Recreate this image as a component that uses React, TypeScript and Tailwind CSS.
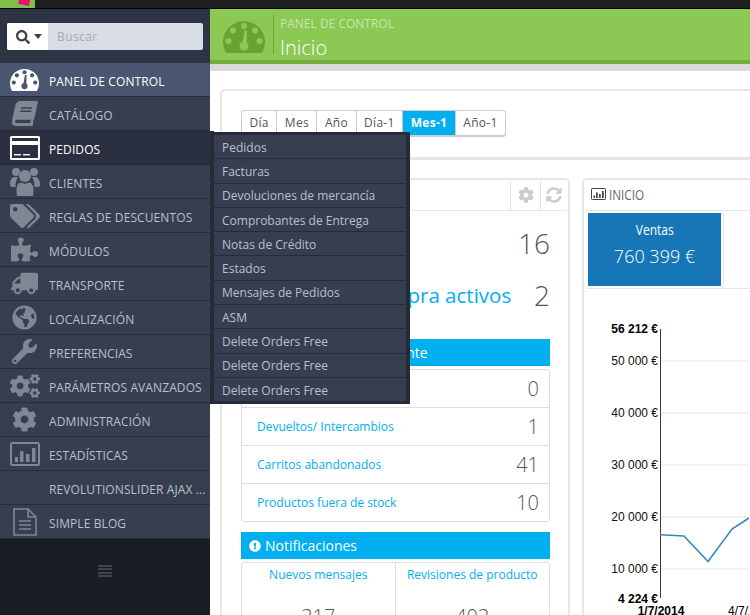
import {
  FaBook,
  FaClock,
  FaCog,
  FaCogs,
  FaExclamationCircle,
  FaGlobeAmericas,
  FaPuzzlePiece,
  FaSearch,
  FaSyncAlt,
  FaTags,
  FaTruck,
  FaWrench,
} from "react-icons/fa";
import type { ReactNode } from "react";

const Gauge = ({ className, hole }: { className: string; hole: string }) => (
  <svg viewBox="0 0 42 33" className={className}>
    <path d="M3 33 A21 21 0 1 1 39 33 Z" fill="currentColor" />
    <g fill={hole}>
      <circle cx="21" cy="6" r="3" />
      <circle cx="10" cy="10.5" r="3" />
      <circle cx="32" cy="10.5" r="3" />
      <circle cx="5.5" cy="21" r="3" />
      <circle cx="36.5" cy="21" r="3" />
      <circle cx="21" cy="26" r="4.5" />
      <path d="M19 26 L21.5 10 L24 10.5 L23.5 26 Z" />
    </g>
  </svg>
);

const CardIcon = () => (
  <svg viewBox="0 0 30 24" className="h-6 w-[30px] text-white">
    <rect x="0" y="0" width="30" height="24" rx="1.5" fill="currentColor" />
    <rect x="2" y="2" width="26" height="3" fill="#2b3040" />
    <rect x="2" y="9" width="26" height="13" fill="#2b3040" />
    <rect x="4" y="18" width="7" height="1.4" fill="currentColor" />
    <rect x="13" y="18" width="7" height="1.4" fill="currentColor" />
  </svg>
);

const UsersIcon = () => (
  <svg viewBox="0 0 30 29" className="h-[29px] w-[30px] text-[#7f8694]" fill="currentColor">
    <circle cx="6" cy="5" r="4" />
    <circle cx="24" cy="5" r="4" />
    <path d="M0 19 C0 12 2 10 5 10 L8 10 C6 13 5.5 16 5.5 20 L2 20 Z" />
    <path d="M30 19 C30 12 28 10 25 10 L22 10 C24 13 24.5 16 24.5 20 L28 20 Z" />
    <circle cx="15" cy="9" r="6" />
    <path d="M7 29 C5.5 20 7.5 16 11 15.5 C13 17 17 17 19 15.5 C22.5 16 24.5 20 23 29 Z" />
  </svg>
);

const StatsIcon = ({ className }: { className: string }) => (
  <svg viewBox="0 0 30 24" className={className}>
    <rect x="1" y="1" width="28" height="22" rx="1.5" fill="none" stroke="currentColor" strokeWidth="2" />
    <rect x="5" y="15" width="3" height="5" fill="currentColor" />
    <rect x="10" y="9" width="3.5" height="11" fill="currentColor" />
    <rect x="16" y="12" width="3.5" height="8" fill="currentColor" />
    <rect x="22" y="6" width="3.5" height="14" fill="currentColor" />
  </svg>
);

const DocIcon = () => (
  <svg viewBox="0 0 24 28" className="h-7 w-6 text-[#7f8694]">
    <path d="M1 1 H15 L23 9 V27 H1 Z" fill="none" stroke="currentColor" strokeWidth="1.6" />
    <path d="M15 1 V9 H23" fill="none" stroke="currentColor" strokeWidth="1.6" />
    <path d="M6 13 H18 M6 17 H18 M6 21 H18" stroke="currentColor" strokeWidth="1.6" />
  </svg>
);

const iconCls = "text-[#7f8694]";

const MENU: { label: string; icon: ReactNode; state?: "home" | "open" }[] = [
  { label: "PANEL DE CONTROL", icon: <Gauge className="h-[23px] w-[29px] text-white" hole="#4a5570" />, state: "home" },
  { label: "CATÁLOGO", icon: <FaBook size={25} className={`${iconCls} -skew-x-12`} /> },
  { label: "PEDIDOS", icon: <CardIcon />, state: "open" },
  { label: "CLIENTES", icon: <UsersIcon /> },
  { label: "REGLAS DE DESCUENTOS", icon: <FaTags size={30} className={iconCls} /> },
  { label: "MÓDULOS", icon: <FaPuzzlePiece size={27} className={iconCls} /> },
  { label: "TRANSPORTE", icon: <FaTruck size={27} className={`${iconCls} -scale-x-100`} /> },
  { label: "LOCALIZACIÓN", icon: <FaGlobeAmericas size={25} className={iconCls} /> },
  { label: "PREFERENCIAS", icon: <FaWrench size={25} className={iconCls} /> },
  { label: "PARÁMETROS AVANZADOS", icon: <FaCogs size={30} className={iconCls} /> },
  { label: "ADMINISTRACIÓN", icon: <FaCog size={25} className={iconCls} /> },
  { label: "ESTADÍSTICAS", icon: <StatsIcon className="h-6 w-[30px] text-[#7f8694]" /> },
  { label: "REVOLUTIONSLIDER AJAX ...", icon: null },
  { label: "SIMPLE BLOG", icon: <DocIcon /> },
];

const SUBMENU = [
  "Pedidos",
  "Facturas",
  "Devoluciones de mercancía",
  "Comprobantes de Entrega",
  "Notas de Crédito",
  "Estados",
  "Mensajes de Pedidos",
  "ASM",
  "Delete Orders Free",
  "Delete Orders Free",
  "Delete Orders Free",
];

const TABS = ["Día", "Mes", "Año", "Día-1", "Mes-1", "Año-1"];

const PENDING = [
  { label: "Pedidos", value: "0" },
  { label: "Devueltos/ Intercambios", value: "1" },
  { label: "Carritos abandonados", value: "41" },
  { label: "Productos fuera de stock", value: "10" },
];

function Sidebar() {
  return (
    <aside className="relative z-10 flex h-[606px] w-[210px] shrink-0 flex-col bg-[#1a1d24]">
      <div className="h-[54px] bg-[#2d3443] px-[7px] pt-[14px]">
        <div className="flex h-[27px] overflow-hidden rounded-[2px] bg-[#d8dce5]">
          <div className="flex w-[41px] items-center gap-[4px] bg-white pl-[9px] text-[#3a3f4a]">
            <FaSearch size={14} />
            <span className="h-0 w-0 border-x-[4px] border-t-[5px] border-x-transparent border-t-[#3a3f4a]" />
          </div>
          <div className="flex items-center pl-[9px] text-[12px] tracking-[0.4px] text-[#a9a9a9]">Buscar</div>
        </div>
      </div>
      {MENU.map((item) => (
        <div
          key={item.label}
          className={`flex h-[34px] items-center border-b border-[#272c38] text-[12px] ${
            item.state === "home"
              ? "bg-[#4a5570] text-white"
              : item.state === "open"
                ? "-mr-1 bg-[#2b3040] text-white"
                : "bg-[#373e50] text-[#b9c0cc]"
          }`}
        >
          <div className="flex w-[49px] shrink-0 items-center justify-center overflow-hidden">{item.icon}</div>
          <span className="whitespace-nowrap pt-[5px] tracking-[0.1px]">{item.label}</span>
        </div>
      ))}
      <div className="flex flex-1 justify-center pt-[26px]">
        <div className="flex h-3 w-[14px] flex-col justify-between">
          <span className="h-[2px] bg-[#3d4453]" />
          <span className="h-[2px] bg-[#3d4453]" />
          <span className="h-[2px] bg-[#3d4453]" />
          <span className="h-[2px] bg-[#3d4453]" />
        </div>
      </div>
      <div className="absolute left-[210px] top-[123px] w-[200px] bg-[#262b38] pb-[2px] pl-1 pr-1 pt-[3px]">
        {SUBMENU.map((label, i) => (
          <div
            key={i}
            className="flex h-[24.3px] items-center border-b border-[#262b38] bg-[#373e50] pl-2 pt-[2px] text-[12px] text-[#b9c0cc]"
          >
            {label}
          </div>
        ))}
      </div>
    </aside>
  );
}

function Chart() {
  const ticks = [
    { y: 361, label: "50 000 €" },
    { y: 413, label: "40 000 €" },
    { y: 465, label: "30 000 €" },
    { y: 517, label: "20 000 €" },
    { y: 569, label: "10 000 €" },
  ];
  return (
    <svg
      viewBox="582 290 168 325"
      className="-ml-[5px] mt-px h-[325px] w-[168px]"
      fontFamily="Liberation Sans, Arial, sans-serif"
      fontSize="12"
    >
      {ticks.map((t) => (
        <g key={t.y}>
          <line x1="661" x2="750" y1={t.y} y2={t.y} stroke="#e5e5e5" strokeWidth="1" />
          <text x="659" y={t.y + 4} textAnchor="end" fill="#111">
            {t.label}
          </text>
        </g>
      ))}
      <text x="659" y="333" textAnchor="end" fontWeight="bold" fill="#000">
        56 212 €
      </text>
      <text x="659" y="603" textAnchor="end" fontWeight="bold" fill="#000">
        4 224 €
      </text>
      <line x1="661.5" x2="661.5" y1="329" y2="598" stroke="#3a3a3a" strokeWidth="1" />
      <polyline points="661,534.7 685,536 709,561.5 733,529 750,518" fill="none" stroke="#2f86c0" strokeWidth="1.5" />
      <text x="662" y="615" textAnchor="middle" fontWeight="bold" fill="#000">
        1/7/2014
      </text>
      <text x="729" y="615" fill="#000">
        4/7/2014
      </text>
    </svg>
  );
}

function BlueBar({ children }: { children: ReactNode }) {
  return (
    <div className="flex h-[27px] items-center gap-1 bg-[#00aff0] pl-2 text-[14px] text-white">{children}</div>
  );
}

function LeftCard() {
  return (
    <section className="-ml-[2px] h-[500px] w-[350px] shrink-0 rounded-t-[5px] border-x-2 border-t-2 border-[#e6e6e6]">
      <div className="mr-[2px] flex h-[31px] justify-end border-b border-[#e6e6e6]">
        <div className="flex w-[30px] items-center justify-center border-l border-[#e6e6e6] text-[#cccccc]">
          <FaCog size={16} />
        </div>
        <div className="flex w-[26px] items-center justify-center border-l border-[#e6e6e6] text-[#cccccc]">
          <FaSyncAlt size={16} />
        </div>
      </div>
      <div className="pl-[19px] pr-[18px]">
        <div className="flex h-[52px] items-center justify-between pt-[12px] text-[#00aff0]">
          <span className="text-[20px]">Visitantes en línea</span>
          <span className="text-[28px] font-light text-[#555555]">16</span>
        </div>
        <div className="flex h-[52px] items-center justify-between pt-[12px] text-[#00aff0]">
          <span className="pl-[15px] text-[20.5px]">Carritos de compra activos</span>
          <span className="text-[28px] font-light text-[#555555]">2</span>
        </div>
        <div className="mt-[24px]">
          <BlueBar>
            <FaClock size={12} className="mr-[10px]" />
            Actualmente Pendiente
          </BlueBar>
        </div>
        <div className="mt-[3px] rounded-[3px] border border-[#dddddd]">
          {PENDING.map((row) => (
            <div
              key={row.label}
              className="flex h-[38px] items-center justify-between border-b border-[#dddddd] pl-[15px] pr-[10px] last:h-[37px] last:border-b-0"
            >
              <span className="text-[12px] text-[#00aff0]">{row.label}</span>
              <span className="text-[20px] font-light text-[#555555]">{row.value}</span>
            </div>
          ))}
        </div>
        <div className="mt-[10px]">
          <BlueBar>
            <FaExclamationCircle size={12} />
            Notificaciones
          </BlueBar>
        </div>
        <div className="mt-[3px] grid grid-cols-2 rounded-[3px] border border-[#dddddd] text-center">
          <div className="h-[80px] border-r border-[#dddddd]">
            <div className="pt-[3px] text-[12px] text-[#00aff0]">Nuevos mensajes</div>
            <div className="pt-[18px] text-[20px] font-light text-[#555555]">317</div>
          </div>
          <div className="h-[80px]">
            <div className="pt-[3px] text-[12px] text-[#00aff0]">Revisiones de producto</div>
            <div className="pt-[18px] text-[20px] font-light text-[#555555]">403</div>
          </div>
        </div>
      </div>
    </section>
  );
}

function RightCard() {
  return (
    <section className="h-[500px] w-[300px] shrink-0 rounded-t-[5px] border-l-2 border-t-2 border-[#e6e6e6] pl-[2px]">
      <div className="flex h-[31px] items-center gap-[3px] border-b border-[#e6e6e6] pb-[2px] pl-[5px] text-[#666666]">
        <StatsIcon className="h-3 w-[15px] shrink-0 text-[#444444]" />
        <span className="origin-left scale-x-[0.78] text-[15px]">INICIO</span>
      </div>
      <div className="flex h-[78px] items-start border-b border-[#e6e6e6] pl-[2px] pt-[2px]">
        <div className="flex h-[73px] w-[133px] flex-col items-center gap-[5px] bg-[#1777b6] pt-[6px] text-white">
          <span className="scale-x-[0.8] text-[15px] leading-5">Ventas</span>
          <span className="text-[18px] font-light leading-6">760 399 €</span>
        </div>
        <div className="ml-[2px] h-[75px] w-[1px] bg-[#e6e6e6]" />
      </div>
      <Chart />
    </section>
  );
}

export default function App() {
  return (
    <div className="h-[615px] w-[750px] overflow-hidden bg-white font-['Open_Sans',sans-serif]">
      <header className="h-[9px] border-b border-black bg-[#202020]">
        <div className="relative h-[8px] w-[35px] overflow-hidden bg-[#7fc04a]">
          <div className="absolute left-[19px] top-[-5px] h-[10px] w-[11px] rotate-12 bg-[#e5126f]" />
        </div>
      </header>
      <div className="flex">
        <Sidebar />
        <main className="min-w-0 flex-1">
          <div className="flex h-[51px] items-stretch bg-[#8bc954] pl-[13px]">
            <div className="flex items-center pt-[3px]">
              <Gauge className="h-[33px] w-[42px] text-[#6ba131]" hole="#8bc954" />
            </div>
            <div className="my-[6px] ml-2 mr-[6px] w-px bg-[#6ba131]" />
            <div className="flex flex-col pt-[7px]">
              <span className="text-[12px] leading-4 text-[#c9e6ab]">PANEL DE CONTROL</span>
              <span className="pt-[2px] text-[20px] font-light leading-7 text-white">Inicio</span>
            </div>
          </div>
          <div className="h-[4px] bg-[#74ad3b]" />
          <div className="h-[7px] bg-[#d9d9d9]" />
          <div className="pl-[10px] pt-[18px]">
            <div className="rounded-tl-[5px] border-l-2 border-t-2 border-[#e6e6e6] pt-[19px]">
              <div className="ml-[19px] flex h-[27px] w-fit rounded-[3px] border border-b-2 border-[#cccccc] text-[12px] tracking-[0.3px] text-[#555555]">
                {TABS.map((tab) => (
                  <div
                    key={tab}
                    className={`flex items-center border-r border-[#cccccc] px-[7.5px] last:border-r-0 ${
                      tab === "Mes-1" ? "bg-[#00aff0] font-bold text-white" : ""
                    }`}
                  >
                    {tab}
                  </div>
                ))}
              </div>
              <div className="mt-[20px] h-[3px] bg-[#e6e6e6]" />
              <div className="flex gap-[12px] pt-[18px]">
                <LeftCard />
                <RightCard />
              </div>
            </div>
          </div>
        </main>
      </div>
    </div>
  );
}
